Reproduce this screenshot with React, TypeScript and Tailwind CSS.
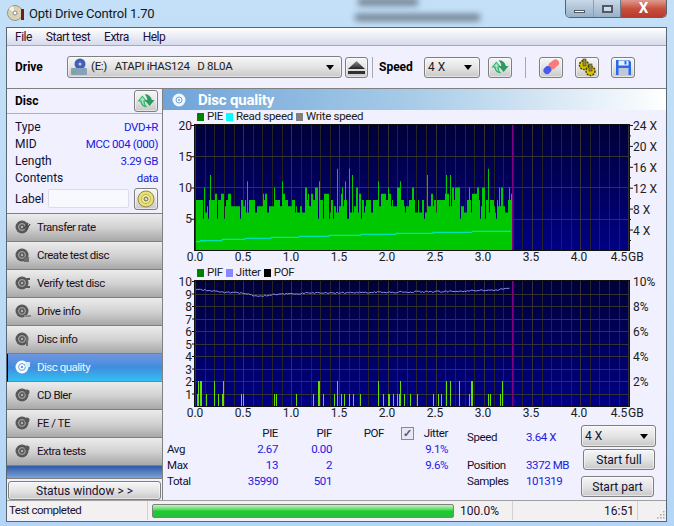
import { ReactNode } from "react";

const FONT = "font-['Roboto','Liberation_Sans',sans-serif]";
const BLUE = "text-[#2020e0]";
const TIGHT = "text-[11.5px] tracking-[-0.4px]";
const BTN =
  "flex items-center justify-center rounded-[3px] border border-[#7f7f7f] bg-gradient-to-b from-[#f6f6f6] via-[#e4e4e4] to-[#c8c8c8] shadow-[inset_0_0_0_1px_#ffffff80]";

function rng(seed: number) {
  let s = seed;
  return () => {
    s = (s * 1103515245 + 12345) & 0x7fffffff;
    return s / 0x7fffffff;
  };
}

// plot geometry, in pixels of the svg
const PLOT_X = 32;
const PLOT_W = 434;
const END_X = 349;

function pieBars() {
  const r = rng(7);
  const out: { x: number; w: number; v: number }[] = [];
  let x = PLOT_X + 1;
  while (x < END_X) {
    const k = r();
    const dip = k < 0.1;
    const w = dip ? 1 : r() < 0.35 ? 1 : r() < 0.6 ? 2 : 3;
    const v = dip ? 5 : k < 0.22 ? 6 : k < 0.48 ? 7 : k < 0.78 ? 8 : k < 0.9 ? 9 : 10;
    out.push({ x, w: Math.min(w, END_X - x), v });
    x += w;
  }
  return out;
}

// tall single peaks, page x -> value
const PIE_PEAKS: [number, number][] = [
  [210, 12], [247, 11], [282, 11], [319, 11], [352, 12], [337, 10],
  [337, 13], [345, 11], [349, 13], [378, 11], [400, 11],
  [427, 12], [446, 12], [450, 12], [459, 10], [469, 10], [488, 13], [478, 10], [509, 10],
];

const READ_STEPS: [number, number][] = [
  [196, 241.7], [200, 240.7], [222, 239.3], [245, 238.3], [271, 237.3], [299, 236.3],
  [329, 235.3], [361, 234.3], [396, 233.3], [433, 232.3], [472, 231.3], [511, 231.3],
];

function readLine() {
  const pts: string[] = [];
  READ_STEPS.forEach(([x, y], i) => {
    if (i > 0) pts.push(`${x - 163},${READ_STEPS[i - 1][1] - 124}`);
    pts.push(`${x - 163},${y - 124}`);
  });
  return pts.join(" ");
}

function Frame() {
  return (
    <>
      <line x1={349.5} x2={349.5} y1={1} y2={126} stroke="#800080" />
      <rect x={PLOT_X - 1} y={0} width={PLOT_W + 2} height={1} fill="#101010" />
      <rect x={PLOT_X - 1} y={0} width={1} height={127} fill="#101010" />
      <rect x={PLOT_X + PLOT_W} y={0} width={1} height={127} fill="#101010" />
      <rect x={PLOT_X - 1} y={126} width={PLOT_W + 2} height={1} fill="#101010" />
    </>
  );
}

function TopChart() {
  const grid: number[] = [];
  for (let i = 0; i <= 45; i++) grid.push(Math.round(PLOT_X + i * 9.63) + 0.5);
  return (
    <svg width={502} height={142} className="block overflow-visible">
      <defs>
        <linearGradient id="plotA" x1="0" y1="0" x2="0" y2="1">
          <stop offset="0" stopColor="#000038" />
          <stop offset="1" stopColor="#000084" />
        </linearGradient>
      </defs>
      <rect x={PLOT_X} y={1} width={PLOT_W} height={125} fill="url(#plotA)" />
      {grid.map((x, i) => (
        <line key={i} x1={x} x2={x} y1={1} y2={126} stroke={i % 5 === 0 ? "#333333" : "#242424"} />
      ))}
      {[32.5, 63.5, 95.5].map((y) => (
        <line key={y} x1={PLOT_X} x2={PLOT_X + PLOT_W} y1={y} y2={y} stroke="#333333" />
      ))}
      {pieBars().map((b, i) => (
        <rect key={i} x={b.x} y={126 - b.v * 6.25} width={b.w} height={b.v * 6.25} fill="#00c800" />
      ))}
      {PIE_PEAKS.map(([px, v], i) => (
        <rect key={i} x={Math.round(px - 163)} y={126 - v * 6.25} width={1} height={v * 6.25} fill="#00c800" />
      ))}
      <polyline fill="none" stroke="#00e8e8" points={readLine()} />
      <Frame />
      {[20, 15, 10, 5].map((v, i) => (
        <g key={v}>
          <line x1={PLOT_X - 4} x2={PLOT_X} y1={1.5 + i * 31.25} y2={1.5 + i * 31.25} stroke="#101010" />
          <text x={PLOT_X - 3} y={5.5 + i * 31.25} textAnchor="end" fontSize={12} fill="#202020">
            {v}
          </text>
        </g>
      ))}
      {[24, 20, 16, 12, 8, 4].map((v, i) => (
        <text key={v} x={470} y={6 + i * 20.9} fontSize={12} fill="#202020">
          {v} X
        </text>
      ))}
      {Array.from({ length: 12 }, (_, i) => (
        <line key={i} x1={466} x2={i % 2 === 0 ? 470 : 468} y1={1.5 + i * 10.45} y2={1.5 + i * 10.45} stroke="#101010" />
      ))}
      <XLabels />
    </svg>
  );
}

function XLabels() {
  const labels = ["0.0", "0.5", "1.0", "1.5", "2.0", "2.5", "3.0", "3.5", "4.0"];
  return (
    <>
      {labels.map((l, i) => (
        <text key={l} x={32 + i * 48} y={137} textAnchor="middle" fontSize={12} fill="#202020">
          {l}
        </text>
      ))}
      <text x={456} y={137} textAnchor="middle" fontSize={12} fill="#202020">
        4.5
      </text>
      <text x={465} y={137} fontSize={12} fill="#202020">
        GB
      </text>
    </>
  );
}

const toLocal = (base: number) => (x: number) => Math.round(base + x / 3 - 163);
const PIF_2 = [100, 104, 109, 148, 175, 460, 463, 517, 640, 706].map(toLocal(165))
  .concat([79, 91, 118, 154, 157, 247].map(toLocal(420)));
const PIF_1 = [96, 122, 160, 172, 227, 235, 328, 334, 394, 445, 475, 508, 527, 538, 553, 565, 586, 655, 670, 673, 685, 697, 703, 718, 736, 757]
  .map(toLocal(165))
  .concat([40, 55, 64, 148, 205, 211, 241].map(toLocal(420)));

function jitterPoints() {
  const r = rng(21);
  const knots: [number, number][] = [
    [33, 9], [60, 12], [78, 13], [94, 16], [120, 14], [160, 13], [240, 12], [290, 11.5], [330, 10], [349, 8.5],
  ];
  const pts: string[] = [];
  for (let x = 33; x < 348; x += 1.5) {
    let i = 0;
    while (i < knots.length - 2 && x > knots[i + 1][0]) i++;
    const [x0, y0] = knots[i];
    const [x1, y1] = knots[i + 1];
    const y = y0 + ((x - x0) / (x1 - x0)) * (y1 - y0) + (r() - 0.5) * 1.6;
    pts.push(`${x},${y.toFixed(1)}`);
  }
  return pts.join(" ");
}

function BottomChart() {
  const grid: number[] = [];
  for (let i = 0; i <= 45; i++) grid.push(Math.round(PLOT_X + i * 9.63) + 0.5);
  return (
    <svg width={502} height={142} className="block overflow-visible">
      <defs>
        <linearGradient id="plotB" x1="0" y1="0" x2="0" y2="1">
          <stop offset="0" stopColor="#000038" />
          <stop offset="1" stopColor="#000084" />
        </linearGradient>
      </defs>
      <rect x={PLOT_X} y={1} width={PLOT_W} height={125} fill="url(#plotB)" />
      {grid.map((x, i) => (
        <line key={i} x1={x} x2={x} y1={1} y2={126} stroke={i % 5 === 0 ? "#333333" : "#262626"} />
      ))}
      {[1, 2, 3, 4, 5, 6, 7, 8, 9].map((i) => (
        <line key={i} x1={PLOT_X} x2={PLOT_X + PLOT_W} y1={Math.round(1 + i * 12.5) + 0.5} y2={Math.round(1 + i * 12.5) + 0.5} stroke="#333333" />
      ))}
      {PIF_1.map((x, i) => (
        <rect key={i} x={x} y={114} width={1} height={12} fill="#66dd00" />
      ))}
      {PIF_2.map((x, i) => (
        <rect key={i} x={x} y={101} width={1} height={25} fill="#66dd00" />
      ))}
      <polyline fill="none" stroke="#8888ff" points={jitterPoints()} />
      <Frame />
      {[10, 9, 8, 7, 6, 5, 4, 3, 2, 1].map((v, i) => (
        <g key={v}>
          <line x1={PLOT_X - 3} x2={PLOT_X} y1={1.5 + i * 12.5} y2={1.5 + i * 12.5} stroke="#101010" />
          <text x={PLOT_X - 3} y={6 + i * 12.5} textAnchor="end" fontSize={12} fill="#202020">
            {v}
          </text>
        </g>
      ))}
      {["10%", "8%", "6%", "4%", "2%"].map((v, i) => (
        <text key={v} x={470} y={6 + i * 25} fontSize={12} fill="#202020">
          {v}
        </text>
      ))}
      <XLabels />
    </svg>
  );
}

function Refresh({ size = 20 }: { size?: number }) {
  return (
    <svg width={size} height={size} viewBox="0 0 20 20">
      <path d="M0.5 10.5 L6 4 L11.5 10.5 H8.5 Q8.5 14 11.5 17 Q5 17 3.5 10.5 Z" fill="#35b070" />
      <path d="M19.5 9 L14 15.5 L8.5 9 H11.5 Q11.5 5.5 8.5 2.5 Q15 2.5 16.5 9 Z" fill="#2a9a60" />
      <path d="M6 5.5 L9 9.5 H7 Q7 13 8.5 15 Q5.5 14 5 9.5 H3 Z" fill="#a4e8c0" />
    </svg>
  );
}

function Arrow() {
  return <span className="h-0 w-0 border-x-[4.5px] border-t-[5px] border-x-transparent border-t-black" />;
}

function NavDisc({ mark, light }: { mark: string; light?: boolean }) {
  const c = light ? "#ffffff" : "#585858";
  const inner = light ? "#5aa0e8" : "#b4b4b4";
  return (
    <svg width={16} height={16} viewBox="0 0 16 16" className="shrink-0">
      <circle cx={7} cy={8} r={6.5} fill={c} />
      <circle cx={7} cy={8} r={3.4} fill="none" stroke={inner} strokeWidth={1} />
      <circle cx={7} cy={8} r={1.2} fill={inner} />
      {mark === "rate" && <path d="M9 10 L13 4 M11 11 L15 5" stroke="#444" strokeWidth={1.3} />}
      {mark === "create" && <path d="M9 10 h5 v5 h-5 z" fill="#6c6c6c" />}
      {mark === "verify" && <path d="M10 4 L15 4 M10 12 L15 12" stroke={c} strokeWidth={2} />}
      {mark === "drive" && <rect x={9} y={12} width={7} height={2} fill="#8a8a8a" />}
      {mark === "info" && <rect x={11} y={5} width={2} height={10} fill="#6c6c6c" />}
      {mark === "quality" && <path d="M10 3 h5 v5 h-5 z" fill="#d8ecff" />}
      {mark === "test" && <circle cx={12} cy={5} r={2.5} fill={c} />}
    </svg>
  );
}

const NAV: [string, string][] = [
  ["Transfer rate", "rate"],
  ["Create test disc", "create"],
  ["Verify test disc", "verify"],
  ["Drive info", "drive"],
  ["Disc info", "info"],
  ["Disc quality", "quality"],
  ["CD Bler", "test"],
  ["FE / TE", "test"],
  ["Extra tests", "test"],
];

function NavButton({ label, mark }: { label: string; mark: string }) {
  const active = label === "Disc quality";
  return (
    <div
      className={
        active
          ? "flex h-[28px] items-center gap-[6px] border-b border-b-[#808080] border-l border-l-black bg-gradient-to-b from-[#6f95de] via-[#3f8de0] to-[#33c0f2] pl-[7px] text-[11.5px] tracking-[-0.5px] text-[#f0f6ff]"
          : "flex h-[28px] items-center gap-[6px] border-b border-b-[#808080] bg-gradient-to-b from-[#ececec] via-[#d2d2d2] to-[#a8a8a8] pl-[8px] text-[11.5px] tracking-[-0.5px] text-[#1c1020]"
      }
    >
      <NavDisc mark={mark} light={active} />
      <span>{label}</span>
    </div>
  );
}

function InfoRow({ label, value }: { label: string; value: string }) {
  return (
    <div className="flex h-[17px] items-center justify-between text-[12px]">
      <span className="text-[#101030]">{label}</span>
      <span className={`${BLUE} ${TIGHT}`}>{value}</span>
    </div>
  );
}

function Legend({ items }: { items: [string, string][] }) {
  return (
    <div className="flex h-[14px] items-center gap-[3px] pl-[34px] text-[11.5px] leading-none tracking-[-0.3px] text-[#202020]">
      {items.map(([c, t]) => (
        <span key={t} className="flex items-center gap-[3px]">
          <span className="h-[8px] w-[7px]" style={{ background: c }} />
          {t}
        </span>
      ))}
    </div>
  );
}

function ToolBtn({ children }: { children: ReactNode }) {
  return <div className={`${BTN} h-[21px] w-[24px]`}>{children}</div>;
}

function Stat({ children, blue, right }: { children?: ReactNode; blue?: boolean; right?: boolean }) {
  return (
    <div className={`flex items-center ${right ? "justify-end" : ""} ${TIGHT} ${blue ? BLUE : "text-[#101030]"}`}>
      {children}
    </div>
  );
}

export default function App() {
  return (
    <div className={`${FONT} relative h-[526px] w-[674px] overflow-hidden bg-gradient-to-b from-[#c4e0f8] to-[#b4d6f6] px-[6px]`}>
      {/* blurred desktop behind the glass */}
      <div className="absolute left-[358px] top-[-2px] h-[8px] w-[60px] bg-[#55606a] opacity-70 blur-[3px]" />
      <div className="absolute left-[355px] top-[14px] h-[7px] w-[125px] bg-[#4a5560] opacity-70 blur-[3px]" />

      {/* title bar */}
      <div className="relative flex h-[27px] items-start justify-between">
        <div className="flex items-center gap-[4px] pl-[1px] pt-[4px]">
          <svg width={18} height={18} viewBox="0 0 18 18">
            <circle cx={8} cy={9} r={7.5} fill="#d8d2b8" />
            <circle cx={8} cy={9} r={7.5} fill="none" stroke="#9a9480" />
            <path d="M8 9 L2 5 A7 7 0 0 1 6 2 Z" fill="#f6f2e0" />
            <circle cx={8} cy={9} r={2} fill="#fff" stroke="#888" />
            <rect x={14} y={5} width={3} height={11} fill="#7a1c14" />
          </svg>
          <span className="text-[13px] leading-none tracking-[-0.2px] text-[#101820]">Opti Drive Control 1.70</span>
        </div>
        <div className="mr-[1px] flex h-[18px] w-[102px] overflow-hidden rounded-b-[5px] border border-t-0 border-[#59636e]">
          <div className="flex w-[28px] items-end justify-center border-r border-r-[#8aa0b4] bg-gradient-to-b from-[#c8d8e8] to-[#98b0c8] pb-[4px]">
            <span className="h-[3px] w-[11px] border border-[#505a64] bg-white" />
          </div>
          <div className="flex w-[27px] items-center justify-center border-r border-r-[#6a7a88] bg-gradient-to-b from-[#c8d8e8] to-[#98b0c8]">
            <span className="h-[8px] w-[11px] border-2 border-[#505a64] bg-white/40" />
          </div>
          <div className="flex flex-1 items-center justify-center bg-gradient-to-b from-[#dd9a90] via-[#c8503f] to-[#b83a2c] text-[15px] font-bold leading-none text-white">
            X
          </div>
        </div>
      </div>

      {/* client area */}
      <div className="h-[495px] w-[661px] border border-[#5a6672] bg-[#f0f0ff]">
        {/* menu */}
        <div className="flex h-[18px] items-center gap-[14px] border-b border-b-[#a8a8b8] bg-gradient-to-b from-[#ffffff] to-[#d6daec] pl-[8px] text-[12px] tracking-[-0.5px] text-[#201038]">
          <span>File</span>
          <span>Start test</span>
          <span>Extra</span>
          <span>Help</span>
        </div>

        {/* toolbar */}
        <div className="flex h-[43px] items-center border-b border-b-[#808080] pl-[8px]">
          <span className="w-[52px] text-[12px] font-bold text-black">Drive</span>
          <div className={`${BTN} h-[22px] w-[275px] !justify-start gap-[3px] pl-[2px] pr-[7px] text-[11.5px] tracking-[-0.3px] text-[#202020]`}>
            <svg width={18} height={18} viewBox="0 0 18 18">
              <circle cx={10} cy={6} r={5.5} fill="#4060b8" />
              <circle cx={10} cy={6} r={1.5} fill="#c0d0f0" />
              <rect x={1} y={10} width={16} height={7} rx={1} fill="#88a0b8" />
              <rect x={3} y={13} width={3} height={2} fill="#30d050" />
            </svg>
            <span className="whitespace-pre">(E:)   ATAPI iHAS124   D 8L0A</span>
            <span className="ml-auto flex"><Arrow /></span>
          </div>
          <div className={`${BTN} ml-[3px] h-[21px] w-[23px]`}>
            <svg width={17} height={13} viewBox="0 0 17 13">
              <defs>
                <linearGradient id="ej" x1="0" y1="0" x2="0" y2="1">
                  <stop offset="0" stopColor="#909090" />
                  <stop offset="1" stopColor="#202020" />
                </linearGradient>
              </defs>
              <path d="M8.5 0 L17 8 H0 Z" fill="url(#ej)" />
              <rect x={0} y={10} width={17} height={3} fill="#303030" />
            </svg>
          </div>
          <span className="ml-[4px] h-[21px] w-px bg-[#a8a8b0]" />
          <span className="ml-[6px] w-[45px] text-[12px] font-bold text-black">Speed</span>
          <div className={`${BTN} h-[21px] w-[56px] !justify-between pl-[3px] pr-[7px] text-[12px] text-[#202020]`}>
            <span>4 X</span>
            <Arrow />
          </div>
          <div className="ml-[8px]">
            <ToolBtn><Refresh size={18} /></ToolBtn>
          </div>
          <span className="ml-[13px] h-[21px] w-px bg-[#a8a8b0]" />
          <div className="ml-[13px] flex gap-[12px]">
            <ToolBtn>
              <svg width={18} height={18} viewBox="0 0 18 18">
                <line x1={11} y1={7} x2={13.5} y2={5} stroke="#f87c7c" strokeWidth={7} strokeLinecap="round" />
                <line x1={5} y1={12.5} x2={6} y2={11.5} stroke="#4a5ae8" strokeWidth={7} strokeLinecap="round" />
                <line x1={8.5} y1={9} x2={11} y2={7} stroke="#f87c7c" strokeWidth={7} />
              </svg>
            </ToolBtn>
            <ToolBtn>
              <svg width={19} height={19} viewBox="0 0 19 19">
                <circle cx={6} cy={7} r={4.5} fill="#d8c400" stroke="#4a4200" strokeWidth={1.5} strokeDasharray="2 1" />
                <circle cx={12.5} cy={13} r={4.5} fill="#d8c400" stroke="#4a4200" strokeWidth={1.5} strokeDasharray="2 1" />
                <rect x={5} y={1} width={3} height={7} fill="#8a8a60" stroke="#4a4200" strokeWidth={0.6} />
                <rect x={11} y={6} width={3} height={7} fill="#8a8a60" stroke="#4a4200" strokeWidth={0.6} />
              </svg>
            </ToolBtn>
            <ToolBtn>
              <svg width={17} height={17} viewBox="0 0 17 17">
                <path d="M1 1 H14 L16 3 V16 H1 Z" fill="#2a6ae8" />
                <rect x={3.5} y={1.5} width={10} height={5} fill="#e8f0ff" />
                <rect x={3.5} y={9} width={10} height={7} fill="#c0c8d8" />
                <rect x={9.5} y={2} width={2} height={3.5} fill="#2a6ae8" />
              </svg>
            </ToolBtn>
          </div>
        </div>

        {/* body */}
        <div className="flex h-[411px]">
          {/* left panel */}
          <div className="flex w-[156px] shrink-0 flex-col border-r border-r-[#808080]">
            <div className="flex h-[26px] items-center justify-between border-b border-b-[#b0b0bc] pl-[8px] pr-[4px]">
              <span className="text-[12px] font-bold text-black">Disc</span>
              <div className={`${BTN} h-[22px] w-[24px]`}><Refresh size={18} /></div>
            </div>
            <div className="flex flex-col pl-[8px] pr-[4px] pt-[5px]">
              <InfoRow label="Type" value="DVD+R" />
              <InfoRow label="MID" value="MCC 004 (000)" />
              <InfoRow label="Length" value="3.29 GB" />
              <InfoRow label="Contents" value="data" />
              <div className="flex h-[24px] items-center text-[12px]">
                <span className="w-[33px] text-[#101030]">Label</span>
                <span className="h-[19px] w-[81px] rounded-[2px] border border-[#dcdce8] bg-[#f8f8ff]" />
                <div className={`${BTN} ml-[5px] h-[22px] w-[24px]`}>
                  <svg width={18} height={18} viewBox="0 0 18 18">
                    <circle cx={9} cy={9} r={8} fill="#e8e070" stroke="#908850" />
                    <circle cx={9} cy={9} r={4.5} fill="#f4f0a0" stroke="#b8b060" />
                    <circle cx={9} cy={9} r={2} fill="#d8d8d8" stroke="#706830" />
                  </svg>
                </div>
              </div>
            </div>
            <div className="mt-[2px] border-t border-t-[#808080]">
              {NAV.map(([l, m]) => (
                <NavButton key={l} label={l} mark={m} />
              ))}
            </div>
            <div className="h-[13px] bg-gradient-to-b from-[#2c5aa8] to-[#7ea2d4]" />
            <div className="flex-1 border-t border-t-[#808080] px-[1px] pt-[2px]">
              <div className={`${BTN} h-[19px] text-[12px] text-[#201030]`}>Status window &gt; &gt;</div>
            </div>
          </div>

          {/* main panel */}
          <div className="min-w-0 flex-1">
            <div className="flex h-[21px] items-center gap-[12px] bg-gradient-to-r from-[#6ea4d8] via-[#a8cce8] to-[#ffffff] pl-[9px]">
              <svg width={14} height={14} viewBox="0 0 14 14">
                <circle cx={7} cy={7} r={6.5} fill="#f0f6ff" />
                <circle cx={7} cy={7} r={3} fill="none" stroke="#6ea4d8" />
                <circle cx={7} cy={7} r={1} fill="#6ea4d8" />
              </svg>
              <span className="pt-[2px] text-[15px] font-bold leading-none tracking-[-0.2px] text-white">Disc quality</span>
            </div>
            <Legend items={[["#008000", "PIE"], ["#00ffff", "Read speed"], ["#808080", "Write speed"]]} />
            <TopChart />
            <Legend items={[["#008000", "PIF"], ["#8888ff", "Jitter"], ["#000000", "POF"]]} />
            <BottomChart />

            {/* stats */}
            <div className="flex items-start pl-[4px] pt-[3px] text-[12px]">
              <div className="grid grid-cols-[52px_59px_54px_52px_64px] grid-rows-[17px_16px_16px_16px]">
                <Stat />
                <Stat right>PIE</Stat>
                <Stat right>PIF</Stat>
                <Stat right>POF</Stat>
                <div className={`flex items-center justify-between pl-[17px] text-[#101030] ${TIGHT}`}>
                  <span className="flex h-[13px] w-[13px] items-center justify-center border border-[#8a8a8a] bg-[#e8e8f0] text-[11px] font-bold leading-none text-[#4a5a90]">
                    ✓
                  </span>
                  <span>Jitter</span>
                </div>
                <Stat>Avg</Stat>
                <Stat blue right>2.67</Stat>
                <Stat blue right>0.00</Stat>
                <Stat />
                <Stat blue right>9.1%</Stat>
                <Stat>Max</Stat>
                <Stat blue right>13</Stat>
                <Stat blue right>2</Stat>
                <Stat />
                <Stat blue right>9.6%</Stat>
                <Stat>Total</Stat>
                <Stat blue right>35990</Stat>
                <Stat blue right>501</Stat>
              </div>
              <div className="ml-[19px] grid w-[114px] grid-cols-[59px_55px] grid-rows-[16px_12px_16px_16px] pt-[5px]">
                <Stat>Speed</Stat>
                <Stat blue>3.64 X</Stat>
                <Stat />
                <Stat />
                <Stat>Position</Stat>
                <Stat blue>3372 MB</Stat>
                <Stat>Samples</Stat>
                <Stat blue>101319</Stat>
              </div>
              <div className="flex w-[75px] flex-col text-[#101030]">
                <div className={`${BTN} h-[22px] !justify-between pl-[3px] pr-[7px]`}>
                  <span>4 X</span>
                  <Arrow />
                </div>
                <div className={`${BTN} ml-[2px] mt-[2px] h-[21px] w-[72px]`}>Start full</div>
                <div className={`${BTN} mt-[6px] h-[21px] w-[73px]`}>Start part</div>
              </div>
            </div>
          </div>
        </div>

        {/* status bar */}
        <div className="flex h-[20px] items-center border-t border-t-[#a0a0a0] bg-[#f2f0f0] text-[12px] text-[#201030]">
          <span className="w-[140px] pl-[2px] text-[11.5px] tracking-[-0.5px]">Test completed</span>
          <span className="h-full w-px bg-[#d4d0d0]" />
          <div className="ml-[4px] h-[14px] w-[302px] rounded-[2px] border border-[#808080] bg-gradient-to-b from-[#c4f0c4] via-[#10d030] to-[#30b840]" />
          <span className="ml-[6px] w-[52px]">100.0%</span>
          <span className="h-full w-px bg-[#d4d0d0]" />
          <span className="w-[124px] pr-[3px] text-right">16:51</span>
          <span className="h-full w-px bg-[#d4d0d0]" />
          <svg width={12} height={12} viewBox="0 0 12 12" className="ml-auto self-end">
            {[[9, 3], [6, 6], [9, 6], [3, 9], [6, 9], [9, 9]].map(([x, y]) => (
              <rect key={`${x}-${y}`} x={x} y={y} width={1.5} height={1.5} fill="#a8a8a8" />
            ))}
          </svg>
        </div>
      </div>
    </div>
  );
}
